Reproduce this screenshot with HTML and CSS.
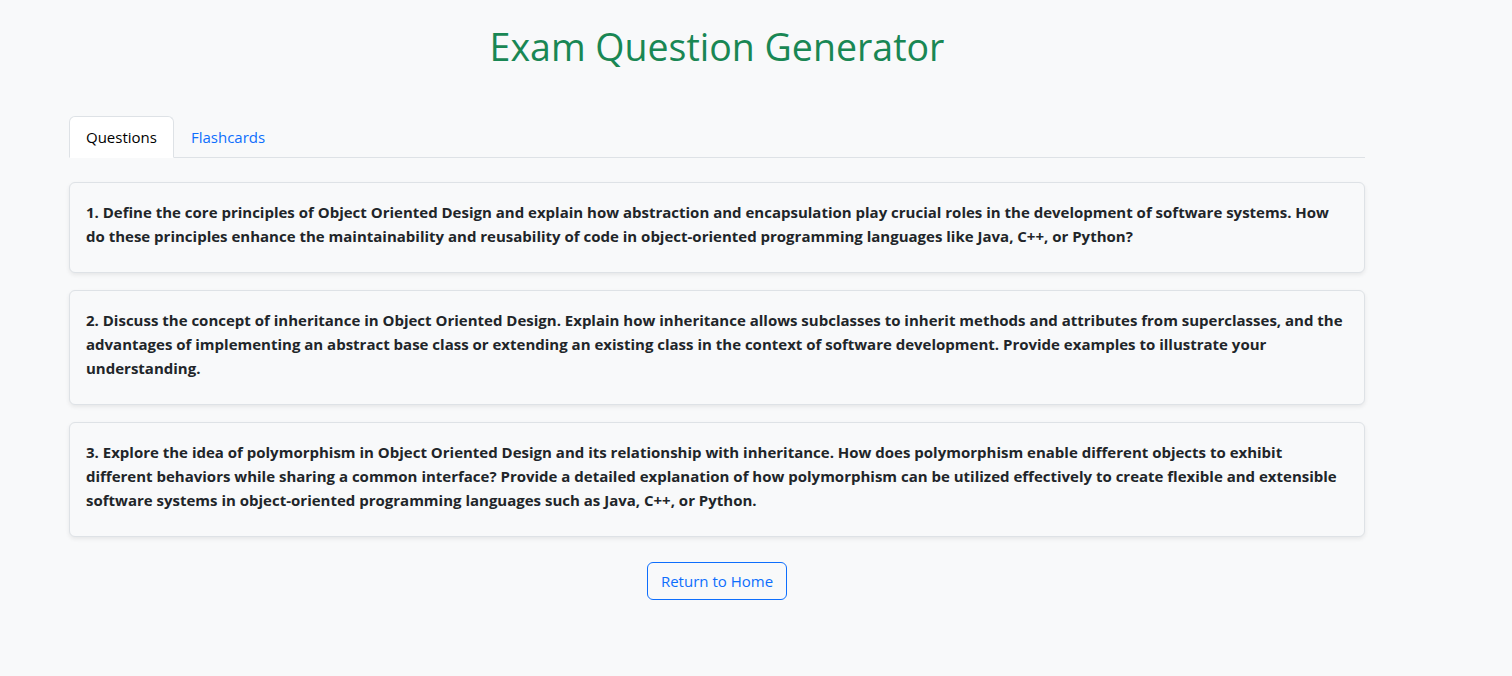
FILE: index.html
```html
<!DOCTYPE html>
<html lang="en">
<head>
<meta charset="utf-8">
<title>Exam Question Generator</title>
<link rel="stylesheet" href="styles.css">
</head>
<body>
<div class="page">
  <h1 class="title">Exam Question Generator</h1>
  <ul class="tabs">
    <li class="tab active">Questions</li>
    <li class="tab">Flashcards</li>
  </ul>
  <div class="cards">
    <div class="card"><p class="q">1. Define the core principles of Object Oriented Design and explain how abstraction and encapsulation play crucial roles in the development of software systems. How do these principles enhance the maintainability and reusability of code in object-oriented programming languages like Java, C++, or Python?</p></div>
    <div class="card"><p class="q">2. Discuss the concept of inheritance in Object Oriented Design. Explain how inheritance allows subclasses to inherit methods and attributes from superclasses, and the advantages of implementing an abstract base class or extending an existing class in the context of software development. Provide examples to illustrate your understanding.</p></div>
    <div class="card"><p class="q">3. Explore the idea of polymorphism in Object Oriented Design and its relationship with inheritance. How does polymorphism enable different objects to exhibit different behaviors while sharing a common interface? Provide a detailed explanation of how polymorphism can be utilized effectively to create flexible and extensible software systems in object-oriented programming languages such as Java, C++, or Python.</p></div>
  </div>
  <div class="actions">
    <button class="btn">Return to Home</button>
  </div>
</div>
</body>
</html>
```
FILE: styles.css
```css
html, body {
  margin: 0;
  background: #f8f9fa;
  color: #212529;
  font-family: "Open Sans", "Noto Sans", sans-serif;
  font-size: 16px;
  line-height: 1.5;
}
.page {
  width: 1296px;
  margin-left: 69px;
  padding-top: 23px;
}
.title {
  margin: 0 0 45px;
  text-align: center;
  font-weight: 400;
  font-size: 37.5px;
  line-height: 48px;
  color: #198754;
}
.tabs {
  list-style: none;
  margin: 0;
  padding: 0;
  display: flex;
  border-bottom: 1px solid #dee2e6;
}
.tab {
  padding: 8px 16px;
  font-size: 15px;
  line-height: 24px;
  color: #0d6efd;
  border: 1px solid transparent;
  border-top-left-radius: 6px;
  border-top-right-radius: 6px;
  margin-bottom: -1px;
}
.tab.active {
  color: #000;
  background: #fff;
  border-color: #dee2e6 #dee2e6 #fff;
}
.cards {
  display: flex;
  flex-direction: column;
  gap: 17px;
  margin-top: 24px;
}
.card {
  border: 1px solid #dee2e6;
  border-radius: 6px;
  background: #f8f9fa;
  box-shadow: 0 2px 4px rgba(0,0,0,.075);
  padding: 17px 16px 24px;
}
.q {
  margin: 0;
  font-size: 15px;
  font-weight: 700;
  line-height: 24px;
}
.actions {
  display: flex;
  justify-content: center;
  margin-top: 25px;
}
.btn {
  font-family: inherit;
  font-size: 15px;
  line-height: 24px;
  padding: 6px 13px;
  color: #0d6efd;
  background: transparent;
  border: 1px solid #0d6efd;
  border-radius: 6px;
}
```
